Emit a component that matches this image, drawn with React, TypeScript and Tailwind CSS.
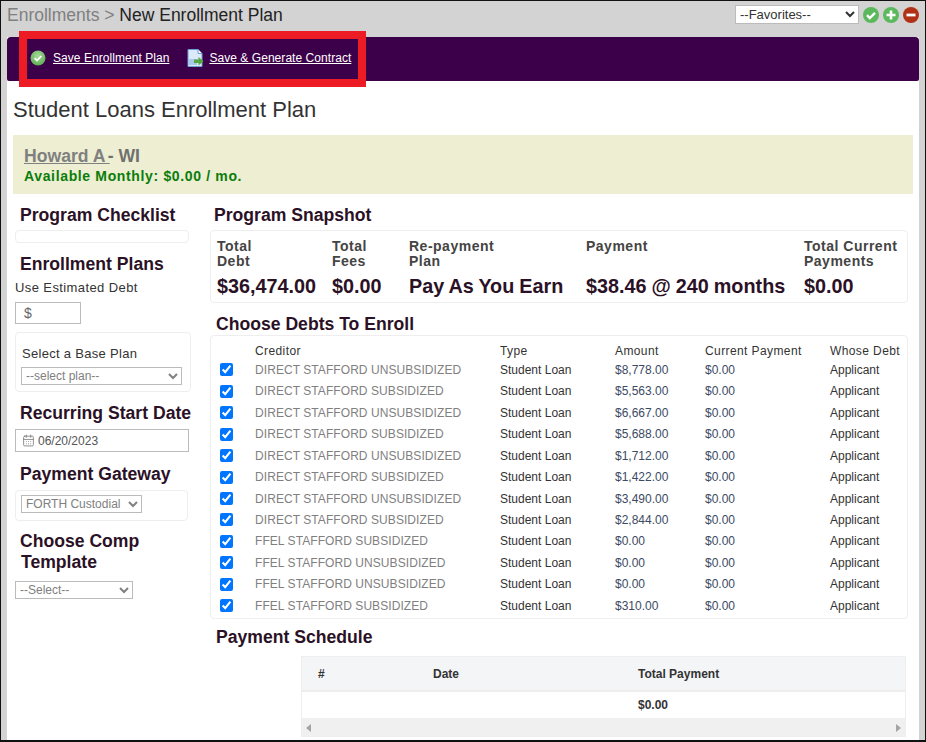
import { CalendarDays } from 'lucide-react';

const debts = [
  ['DIRECT STAFFORD UNSUBSIDIZED', '$8,778.00'],
  ['DIRECT STAFFORD SUBSIDIZED', '$5,563.00'],
  ['DIRECT STAFFORD UNSUBSIDIZED', '$6,667.00'],
  ['DIRECT STAFFORD SUBSIDIZED', '$5,688.00'],
  ['DIRECT STAFFORD UNSUBSIDIZED', '$1,712.00'],
  ['DIRECT STAFFORD SUBSIDIZED', '$1,422.00'],
  ['DIRECT STAFFORD UNSUBSIDIZED', '$3,490.00'],
  ['DIRECT STAFFORD SUBSIDIZED', '$2,844.00'],
  ['FFEL STAFFORD SUBSIDIZED', '$0.00'],
  ['FFEL STAFFORD UNSUBSIDIZED', '$0.00'],
  ['FFEL STAFFORD UNSUBSIDIZED', '$0.00'],
  ['FFEL STAFFORD SUBSIDIZED', '$310.00'],
];

const snapshot = [
  { w: 'w-[115px]', label: ['Total', 'Debt'], value: '$36,474.00' },
  { w: 'w-[77px]', label: ['Total', 'Fees'], value: '$0.00' },
  { w: 'w-[177px]', label: ['Re-payment', 'Plan'], value: 'Pay As You Earn' },
  { w: 'w-[218px]', label: ['Payment', '\u00a0'], value: '$38.46 @ 240 months' },
  { w: 'w-[100px]', label: ['Total Current', 'Payments'], value: '$0.00' },
];

function Heading({ children, className = '' }: { children: React.ReactNode; className?: string }) {
  return <h3 className={`text-[17.6px] leading-[21px] font-bold text-[#2b1126] ${className}`}>{children}</h3>;
}

function SaveIcon() {
  return (
    <svg width="16" height="16" viewBox="0 0 16 16">
      <defs>
        <radialGradient id="sg" cx="50%" cy="35%" r="65%">
          <stop offset="0%" stopColor="#a6d99a" />
          <stop offset="100%" stopColor="#5fae55" />
        </radialGradient>
      </defs>
      <circle cx="8" cy="8" r="7.5" fill="url(#sg)" />
      <path d="M4.6 8.2l2.4 2.3 4.3-4.5" fill="none" stroke="#fff" strokeWidth="1.8" />
    </svg>
  );
}

function ContractIcon() {
  return (
    <svg width="17" height="18" viewBox="0 0 17 18">
      <path d="M1 .5h10l4 4v13H1z" fill="#dbe9f8" stroke="#6d9fd8" />
      <path d="M11 .5v4h4" fill="#fff" stroke="#6d9fd8" />
      <path d="M2 10h8v6H2z" fill="#a9c8ec" />
      <path d="M7 10.5h4.5V8l5 4.2-5 4.3v-2.5H7z" fill="#55a83f" />
    </svg>
  );
}

export default function App() {
  return (
    <div className="relative w-[926px] h-[742px] overflow-hidden bg-[#d3d3d3] border-t border-l border-r border-b-2 border-[#111] font-['Liberation_Sans',Arial,sans-serif]">
      <div className="flex h-[36px] items-center pl-[6px] pr-[6px]">
        <div className="text-[17.5px] leading-[28px] -mt-[8px] text-[#222]">
          <span className="text-[#808080]">Enrollments &gt; </span>New Enrollment Plan
        </div>
        <div className="ml-auto flex items-center gap-[4px] -mt-[9px]">
          <select className="w-[124px] h-[19px] bg-white border border-[#bbb] text-[13px] text-[#333]" defaultValue="f">
            <option value="f">--Favorites--</option>
          </select>
          <svg width="16" height="16" viewBox="0 0 16 16"><circle cx="8" cy="8" r="8" fill="#5cb85c" /><path d="M4 8.2l2.8 2.8L12 5.8" fill="none" stroke="#fff" strokeWidth="2.4" /></svg>
          <svg width="16" height="16" viewBox="0 0 16 16"><circle cx="8" cy="8" r="8" fill="#5cb85c" /><path d="M8 3.5v9M3.5 8h9" stroke="#fff" strokeWidth="2.6" /></svg>
          <svg width="16" height="16" viewBox="0 0 16 16"><circle cx="8" cy="8" r="8" fill="#b03116" /><path d="M3.5 8h9" stroke="#fff" strokeWidth="2.8" /></svg>
        </div>
      </div>

      <div className="ml-[6px] mr-[6px] h-[704px] bg-white">
        <div className="flex h-[44px] items-center gap-[18px] pl-[23px] pb-[2px] rounded-t-[4px] rounded-b-[2px] bg-[#3c004b]">
          <a className="flex items-center gap-[7px] text-[12px] tracking-[0.05px] text-white underline">
            <SaveIcon />Save Enrollment Plan
          </a>
          <a className="flex items-center gap-[5px] text-[12px] tracking-[0.05px] text-white underline">
            <ContractIcon />Save &amp; Generate Contract
          </a>
        </div>

        <h2 className="mt-[16px] ml-[6px] text-[22px] leading-[26px] text-[#333]">Student Loans Enrollment Plan</h2>

        <div className="mt-[12px] mx-[6px] h-[59px] bg-[#edeed2] pl-[11px] pt-[11px]">
          <div className="text-[17.6px] leading-[21px] font-bold text-[#808080]"><span className="underline">Howard A </span><span className="-ml-[2px] text-[#707070]">- WI</span></div>
          <div className="text-[14px] leading-[18px] font-bold text-[#0a7d0a] tracking-[0.65px]">Available Monthly: $0.00 / mo.</div>
        </div>

        <div className="flex mt-[11px]">
          <div className="w-[206px] shrink-0 pl-[8px]">
            <Heading className="ml-[5px]">Program Checklist</Heading>
            <div className="mt-[4px] w-[174px] h-[13px] border border-[#eee] rounded-[4px]" />
            <Heading className="ml-[5px] mt-[11px]">Enrollment Plans</Heading>
            <div className="mt-[3px] text-[13px] leading-[20px] tracking-[0.4px] text-[#333]">Use Estimated Debt</div>
            <div className="mt-[4px] flex items-center w-[66px] h-[22px] border border-[#bbb] pl-[8px] text-[14px] text-[#666]">$</div>
            <div className="mt-[8px] w-[176px] h-[60px] border border-[#eee] rounded-[4px] pl-[5px] pt-[12px]">
              <div className="ml-[1px] text-[13px] leading-[18px] text-[#333] tracking-[0.3px]">Select a Base Plan</div>
              <select className="mt-[4px] w-[161px] h-[18px] border border-[#bbb] bg-white text-[12px] text-[#808080]" defaultValue="p">
                <option value="p">--select plan--</option>
              </select>
            </div>
            <Heading className="ml-[5px] mt-[11px]">Recurring Start Date</Heading>
            <div className="mt-[5px] flex items-center gap-[3px] w-[174px] h-[23px] border border-[#bbb] pl-[6px] text-[12px] text-[#555]">
              <CalendarDays size={13} strokeWidth={1.5} className="text-[#777]" />06/20/2023
            </div>
            <Heading className="ml-[5px] mt-[12px]">Payment Gateway</Heading>
            <div className="mt-[5px] w-[173px] h-[31px] border border-[#eee] rounded-[4px] pl-[5px] pt-[4px]">
              <select className="block w-[121px] h-[18px] border border-[#bbb] bg-white text-[12px] text-[#808080]" defaultValue="f">
                <option value="f">FORTH Custodial</option>
              </select>
            </div>
            <Heading className="ml-[5px] mt-[10px]">Choose Comp<br /><span className="ml-[1px]">Template</span></Heading>
            <select className="mt-[8px] w-[118px] h-[18px] border border-[#bbb] bg-white text-[12px] text-[#808080]" defaultValue="s">
              <option value="s">--Select--</option>
            </select>
          </div>

          <div className="flex-1 min-w-0">
            <Heading className="ml-[1px]">Program Snapshot</Heading>
            <div className="mt-[4px] ml-[-3px] w-[698px] h-[73px] border border-[#eee] rounded-[4px] flex pl-[6px] pt-[8px]">
              {snapshot.map(s => (
                <div key={s.value} className={s.w}>
                  <div className="text-[14px] leading-[15px] font-bold text-[#444] tracking-[0.5px] whitespace-nowrap">{s.label[0]}<br />{s.label[1]}</div>
                  <div className="mt-[5px] text-[19.8px] leading-[24px] font-bold text-[#2b1126] whitespace-nowrap [word-spacing:-0.5px]">{s.value}</div>
                </div>
              ))}
            </div>

            <Heading className="ml-[3px] mt-[11px]">Choose Debts To Enroll</Heading>
            <div className="ml-[-3px] w-[698px] h-[284px] border border-[#eee] rounded-[4px] pt-[6px] text-[12px] text-[#333]">
              <div className="flex h-[17.2px] items-center pl-[44px] text-[#333] tracking-[0.4px]">
                <span className="w-[245px]">Creditor</span>
                <span className="w-[115px]">Type</span>
                <span className="w-[90px]">Amount</span>
                <span className="w-[125px]">Current Payment</span>
                <span>Whose Debt</span>
              </div>
              {debts.map((d, i) => (
                <div key={i} className="flex h-[21.45px] items-center pl-[9px]">
                  <input type="checkbox" checked readOnly className="w-[13px] h-[13px] m-0 mr-[22px]" />
                  <span className="w-[245px] text-[#808080] tracking-[0.07px] whitespace-nowrap">{d[0]}</span>
                  <span className="w-[115px]">Student Loan</span>
                  <span className="w-[90px] text-[#3c4a63]">{d[1]}</span>
                  <span className="w-[125px] text-[#3c4a63]">$0.00</span>
                  <span>Applicant</span>
                </div>
              ))}
            </div>

            <Heading className="ml-[3px] mt-[8px]">Payment Schedule</Heading>
            <div className="mt-[8px] ml-[88px] w-[605px] border border-[#eee] text-[12px] text-[#333]">
              <div className="flex h-[35px] items-center bg-[#f4f5f7] border-b-2 border-[#eee] font-bold">
                <span className="w-[131px] pl-[16px]">#</span>
                <span className="w-[205px]">Date</span>
                <span>Total Payment</span>
              </div>
              <div className="flex h-[27px] items-center border-b border-[#eee] font-bold">
                <span className="ml-[336px]">$0.00</span>
              </div>
              <div className="flex h-[17px] items-center justify-between bg-[#f0f0f0] px-[4px] text-[#a3a3a3]">
                <svg width="5" height="8" viewBox="0 0 5 8"><path d="M5 0v8L0 4z" fill="currentColor" /></svg>
                <svg width="5" height="8" viewBox="0 0 5 8"><path d="M0 0v8l5-4z" fill="currentColor" /></svg>
              </div>
            </div>
          </div>
        </div>
      </div>

      <div className="absolute left-[18px] top-[30px] w-[347px] h-[56px] border-[8px] border-[#ed1c24]" />
    </div>
  );
}
